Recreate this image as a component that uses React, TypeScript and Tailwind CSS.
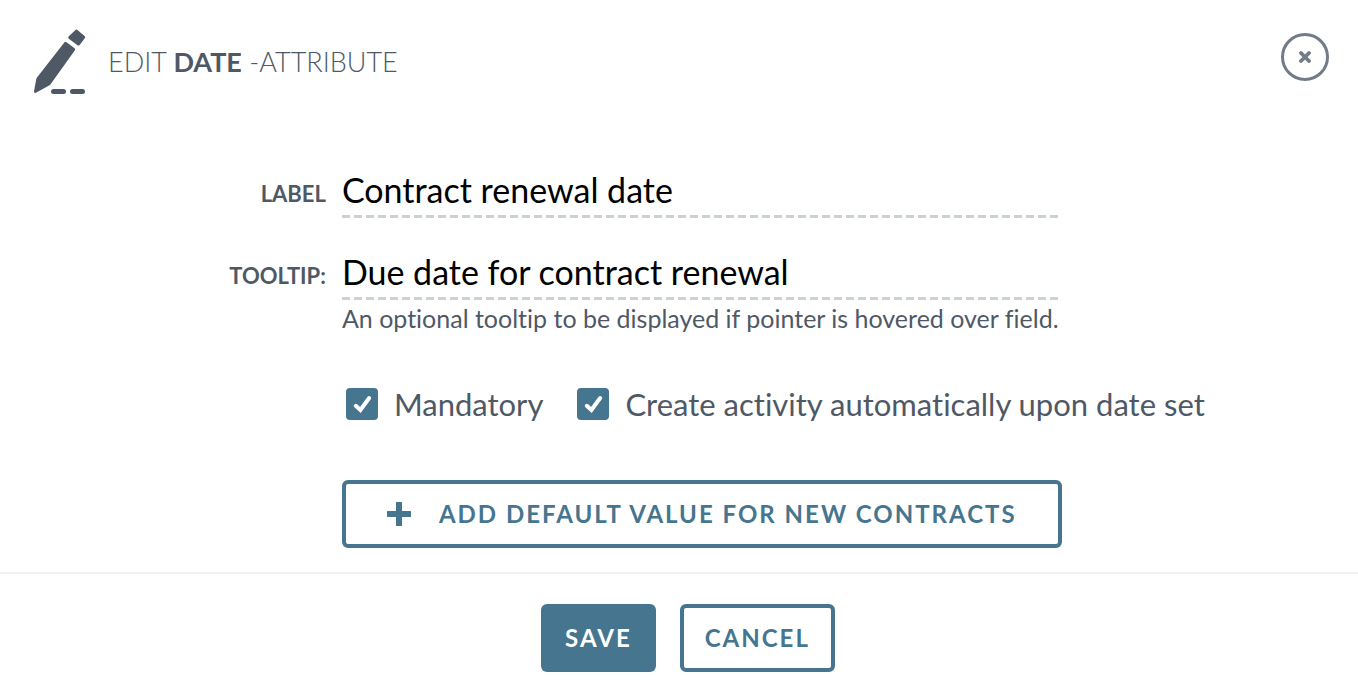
import React, { useState } from "react";

function EditIcon() {
    return (
        <svg className="h-[66px] w-[52px] shrink-0" viewBox="0 0 52 66" fill="currentColor" aria-hidden="true">
            <path d="M41.2 1.2q1-1.1 2.2-.2l7.2 6q1.1 1 .3 2.1l-5.2 6.9q-1 1.1-2.2.2l-8.7-6.5q-1.1-1-.3-2.1z" />
            <path d="M30.3 13.4q1-1.1 2.2-.2l8.1 6.1q1.1.9.3 2L16.6 55.2q-.6.8-1.5 1.3L2.4 63.6Q.2 64.6 0 62.4L2.2 50.2q.2-.9.8-1.7z" />
            <rect x="17" y="60" width="15" height="5" rx="2.5" />
            <rect x="36" y="60" width="15" height="5" rx="2.5" />
        </svg>
    );
}

function CloseIcon() {
    return (
        <svg className="h-3 w-3" viewBox="0 0 12 12" stroke="currentColor" strokeWidth="3.8" strokeLinecap="round" aria-hidden="true">
            <path d="M2 2l8 8M10 2l-8 8" />
        </svg>
    );
}

function PlusIcon() {
    return (
        <svg className="h-6 w-6 shrink-0" viewBox="0 0 24 24" fill="currentColor" aria-hidden="true">
            <path d="M9 .5q0-.5.5-.5h5q.5 0 .5.5V9h8.500q.5 0 .5.5v5q0 .5-.5.5H15v8.500q0 .5-.5.5h-5q-.5 0-.5-.5V15H.5q-.5 0-.5-.5v-5Q0 9 .5 9H9z" />
        </svg>
    );
}

interface TextInputProps {
    id: string;
    value: string;
    onChange: (value: string) => void;
}

function TextInput({ id, value, onChange }: TextInputProps) {
    return (
        <input
            id={id}
            type="text"
            value={value}
            onChange={(e) => onChange(e.target.value)}
            className="h-[54px] w-full bg-[repeating-linear-gradient(90deg,#c8d2d7_0_8px,transparent_8px_12px)] bg-[length:100%_3px] bg-bottom bg-no-repeat pb-1 text-[34px] text-black outline-none"
        />
    );
}

interface CheckboxProps {
    id: string;
    label: string;
    checked: boolean;
    onChange: (checked: boolean) => void;
}

function Checkbox({ id, label, checked, onChange }: CheckboxProps) {
    return (
        <label htmlFor={id} className="flex cursor-pointer items-center gap-4">
            <span className="grid shrink-0 text-white">
                <input
                    id={id}
                    type="checkbox"
                    checked={checked}
                    onChange={(e) => onChange(e.target.checked)}
                    className="col-start-1 row-start-1 h-8 w-8 appearance-none rounded border-2 border-[#46758f] checked:bg-[#46758f]"
                />
                {checked && (
                    <svg className="pointer-events-none col-start-1 row-start-1 h-8 w-8" viewBox="0 0 32 32" fill="none" stroke="currentColor" strokeWidth="4" aria-hidden="true">
                        <path d="M9.8 17.8l4.6 4.2L23.2 10" strokeLinecap="round" />
                    </svg>
                )}
            </span>
            <span className="whitespace-nowrap text-[31px] leading-10">{label}</span>
        </label>
    );
}

export default function App() {
    const [label, setLabel] = useState("Contract renewal date");
    const [tooltip, setTooltip] = useState("Due date for contract renewal");
    const [mandatory, setMandatory] = useState(true);
    const [createActivity, setCreateActivity] = useState(true);

    return (
        <form className="bg-white font-['Lato',sans-serif] text-[#4f5966] [font-variant-ligatures:none]" onSubmit={(e) => e.preventDefault()}>
            <header className="flex items-start justify-between pt-[29px] pr-[29px] pl-[34px]">
                <div className="flex items-center gap-[22px]">
                    <EditIcon />
                    <h1 className="text-[27px] font-light">
                        EDIT <strong className="font-bold">DATE</strong> -ATTRIBUTE
                    </h1>
                </div>
                <button type="button" aria-label="Close" className="mt-1 flex h-12 w-12 items-center justify-center rounded-full border-3 border-[#727c88] text-[#727c88]">
                    <CloseIcon />
                </button>
            </header>

            <div className="grid grid-cols-[24%_53%_1fr] gap-x-4 pt-[69px] pb-6">
                <label htmlFor="label" className="pt-3.5 text-right text-[22px] leading-8 font-bold">LABEL</label>
                <TextInput id="label" value={label} onChange={setLabel} />

                <label htmlFor="tooltip" className="col-start-1 mt-7 pt-3.5 text-right text-[22px] leading-8 font-bold">TOOLTIP:</label>
                <div className="mt-7">
                    <TextInput id="tooltip" value={tooltip} onChange={setTooltip} />
                    <p className="text-[25px] leading-9 whitespace-nowrap">An optional tooltip to be displayed if pointer is hovered over field.</p>
                </div>

                <div className="col-span-2 col-start-2 mt-12 flex gap-[34px] pl-1">
                    <Checkbox id="mandatory" label="Mandatory" checked={mandatory} onChange={setMandatory} />
                    <Checkbox id="activity" label="Create activity automatically upon date set" checked={createActivity} onChange={setCreateActivity} />
                </div>

                <button type="button" className="col-start-2 mt-14 flex h-[68px] items-center justify-center gap-7 rounded-md border-4 border-[#46758f] text-2xl font-bold tracking-[2px] whitespace-nowrap text-[#46758f]">
                    <PlusIcon />
                    ADD DEFAULT VALUE FOR NEW CONTRACTS
                </button>
            </div>

            <footer className="flex justify-center gap-6 border-t-2 border-[#f1f1f1] pt-[30px] pb-3.5 pl-[18px] text-2xl font-bold tracking-[2px]">
                <button type="submit" className="h-[68px] rounded-md bg-[#46758f] px-6 text-white">SAVE</button>
                <button type="button" className="h-[68px] rounded-md border-4 border-[#46758f] px-[21px] text-[#46758f]">CANCEL</button>
            </footer>
        </form>
    );
}
